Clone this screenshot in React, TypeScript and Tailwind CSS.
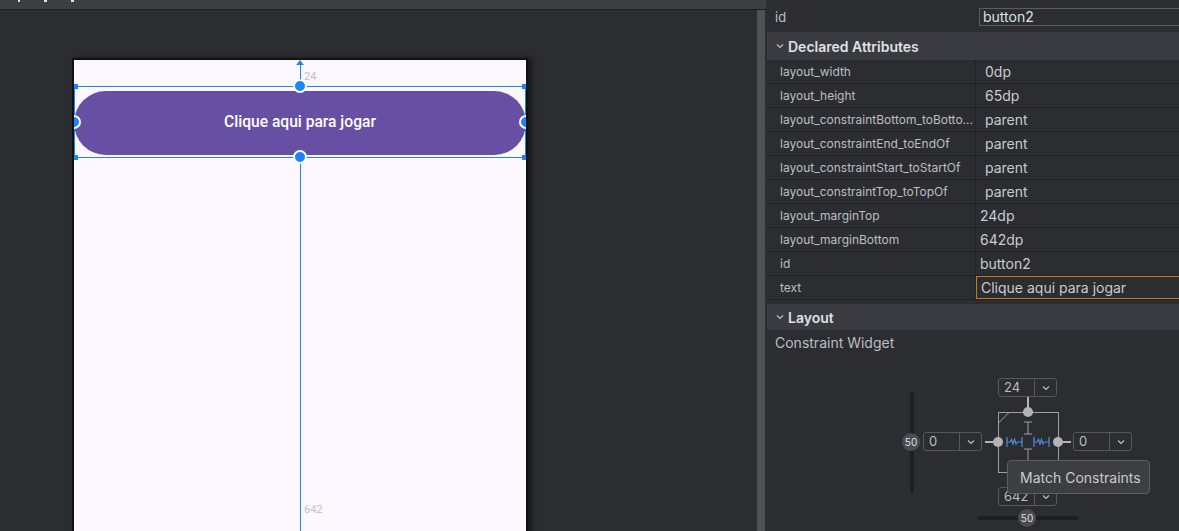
import React from 'react'

const rows: { name: string; value: string; indent: boolean; active?: boolean }[] = [
  { name: 'layout_width', value: '0dp', indent: true },
  { name: 'layout_height', value: '65dp', indent: true },
  { name: 'layout_constraintBottom_toBotto...', value: 'parent', indent: true },
  { name: 'layout_constraintEnd_toEndOf', value: 'parent', indent: true },
  { name: 'layout_constraintStart_toStartOf', value: 'parent', indent: true },
  { name: 'layout_constraintTop_toTopOf', value: 'parent', indent: true },
  { name: 'layout_marginTop', value: '24dp', indent: false },
  { name: 'layout_marginBottom', value: '642dp', indent: false },
  { name: 'id', value: 'button2', indent: false },
  { name: 'text', value: 'Clique aqui para jogar', indent: false, active: true },
]

function Chevron({ className }: { className?: string }) {
  return (
    <svg width="10" height="10" viewBox="0 0 10 10" className={className}>
      <path d="M2 3.5 L5 6.5 L8 3.5" fill="none" stroke="currentColor" strokeWidth="1.2" />
    </svg>
  )
}

function Dropdown({ value, className }: { value: string; className: string }) {
  return (
    <div className={`absolute flex h-[19px] w-[59px] items-center rounded-[3px] border border-[#55585d] bg-[#2b2d30] text-[13px] text-[#bcbec4] ${className}`}>
      <span className="flex-1 pl-[5px] leading-none">{value}</span>
      <div className="flex h-full w-[22px] items-center justify-center border-l border-[#55585d] text-[#bcbec4]">
        <Chevron />
      </div>
    </div>
  )
}

function Knob({ className }: { className: string }) {
  return (
    <div className={`absolute flex h-[18px] w-[18px] items-center justify-center rounded-full bg-[#4a4c50] text-[10px] text-[#dfe1e5] ${className}`}>
      50
    </div>
  )
}

function Handle({ className }: { className: string }) {
  return <div className={`absolute h-[14px] w-[14px] rounded-full border-2 border-white bg-[#1a85ff] ${className}`} />
}

function Spring({ x }: { x: number }) {
  return (
    <g stroke="#4d8fe0" strokeWidth="1.2" fill="none">
      <line x1={x} y1={82} x2={x} y2={92} />
      <path d={`M${x} 87 H${x + 3} L${x + 4.5} 84.5 L${x + 6} 89 L${x + 7.5} 84.5 L${x + 9} 89 L${x + 10.5} 87 H${x + 15}`} />
      <line x1={x + 15} y1={82} x2={x + 15} y2={92} />
    </g>
  )
}

export default function App() {
  return (
    <div className="flex h-[531px] w-[1179px] overflow-hidden bg-[#2b2d30] font-['Inter',sans-serif]">
      {/* design surface */}
      <div className="flex w-[766px] flex-col">
        <div className="flex h-[10px] shrink-0 items-start gap-[24px] border-b border-[#1e1f22] bg-[#3b3e42] pl-[18px]">
          <div className="h-[2px] w-[2px] bg-[#dfe1e5]" />
          <div className="h-[2px] w-[3px] bg-[#dfe1e5]" />
          <div className="h-[2px] w-[3px] bg-[#dfe1e5]" />
        </div>
        <div className="flex flex-1">
          <div className="w-[757px] overflow-hidden pl-[72px] pt-[48px]">
            <div className="relative h-[500px] w-[456px] border-2 border-[#111] bg-[#fdf7ff] shadow-[4px_0_6px_rgba(0,0,0,0.5)] font-['Roboto',sans-serif]">
              <div className="relative h-full w-full overflow-hidden">
                {/* button */}
                <div className="mt-[31px] flex h-[64px] w-full items-center justify-center rounded-full bg-[#6750a4] text-[15.6px] font-medium text-white">
                  Clique aqui para jogar
                </div>

                {/* selection */}
                <div className="absolute left-0 top-[26px] h-[72px] w-[452px] border border-[#1a85ff]" />
                <div className="absolute left-0 top-[24px] h-[5px] w-[4px] bg-[#1a85ff]" />
                <div className="absolute right-0 top-[24px] h-[5px] w-[4px] bg-[#1a85ff]" />
                <div className="absolute left-0 top-[95px] h-[5px] w-[4px] bg-[#1a85ff]" />
                <div className="absolute right-0 top-[95px] h-[5px] w-[4px] bg-[#1a85ff]" />

                {/* top margin arrow */}
                <div className="absolute left-[226px] top-[3px] h-[23px] w-[1px] bg-[#1a85ff]" />
                <div className="absolute left-[222px] top-0 h-0 w-0 border-x-[4.5px] border-b-[5px] border-x-transparent border-b-[#1a85ff]" />
                <span className="absolute left-[230px] top-[9px] text-[11px] text-[#bdbdbd]">24</span>

                {/* bottom margin line */}
                <div className="absolute left-[226px] top-[98px] h-[402px] w-[1px] bg-[#1a85ff]" />
                <span className="absolute left-[230px] top-[442px] text-[11px] text-[#c4c4c4]">642</span>

                <Handle className="left-[219px] top-[19px]" />
                <Handle className="left-[219px] top-[90px]" />
                <Handle className="left-[-7px] top-[55px]" />
                <Handle className="left-[445px] top-[55px]" />
              </div>
            </div>
          </div>
          <div className="w-[8px] bg-[#4e5155]" />
        </div>
      </div>

      {/* attributes panel */}
      <div className="flex flex-1 flex-col overflow-hidden text-[#bcbec4]">
        <div className="flex h-[32px] pt-[8px]">
          <span className="w-[213px] shrink-0 pl-[9px] text-[13px] leading-[18px] text-[#bcbec4]">id</span>
          <div className="mr-[-4px] h-[18px] flex-1 border border-[#5a5d63] pl-[3px] text-[14px] leading-[16px] text-[#dfe1e5]">button2</div>
        </div>

        <div className="ml-[1px] flex h-[28px] items-center bg-[#393b40] pl-[8px] text-[14px] font-semibold text-[#dfe1e5]">
          <Chevron className="mr-[3px] text-[#bcbec4]" />
          Declared Attributes
        </div>

        <div className="ml-[1px]">
          {rows.map(r => (
            <div key={r.name} className="flex h-[24px] border-b border-[#222326]">
              <div className="flex w-[209px] shrink-0 items-center overflow-hidden whitespace-nowrap border-r border-[#222326] pl-[13px] text-[12px] text-[#bcbec4]">
                {r.name}
              </div>
              <div
                className={`flex flex-1 items-center text-[14px] text-[#c9cbd0] ${r.indent ? 'pl-[9px]' : 'pl-[4px]'} ${r.active ? 'mr-[-4px] border border-[#c07b24]' : ''}`}
              >
                {r.value}
              </div>
            </div>
          ))}
        </div>

        <div className="ml-[1px] mt-[4px] flex h-[26px] items-center bg-[#393b40] pl-[8px] text-[14px] font-semibold text-[#dfe1e5]">
          <Chevron className="mr-[3px] text-[#bcbec4]" />
          Layout
        </div>

        <div className="flex h-[25px] items-center pl-[9px] text-[14px] text-[#bcbec4]">Constraint Widget</div>

        {/* constraint widget */}
        <div className="relative flex-1">
          <svg width="413" height="176" className="absolute left-0 top-0">
            <rect x="144" y="36" width="4" height="102" rx="2" fill="#1e1f22" />
            <rect x="211" y="161" width="102" height="4" rx="2" fill="#1e1f22" />
            <g stroke="#9d9fa3" strokeWidth="1" fill="none">
              <rect x="232.5" y="57.5" width="60" height="60" />
              <line x1="232.5" y1="68" x2="243" y2="57.5" />
              <line x1="262" y1="67" x2="262" y2="79" />
              <line x1="258" y1="67" x2="266" y2="67" />
              <line x1="258" y1="79" x2="266" y2="79" />
              <line x1="262" y1="94" x2="262" y2="110" />
              <line x1="258" y1="94" x2="266" y2="94" />
            </g>
            <g stroke="#b1b3b7" strokeWidth="2">
              <line x1="262" y1="41" x2="262" y2="52" />
              <line x1="219" y1="87" x2="227" y2="87" />
              <line x1="297" y1="87" x2="305" y2="87" />
            </g>
            <g fill="#b1b3b7">
              <circle cx="262" cy="57" r="5" />
              <circle cx="232" cy="87" r="5" />
              <circle cx="292" cy="87" r="5" />
            </g>
            <Spring x={241} />
            <Spring x={268} />
          </svg>

          <Knob className="left-[136px] top-[78px]" />
          <Knob className="left-[252px] top-[154px]" />

          <Dropdown value="24" className="left-[232px] top-[23px]" />
          <Dropdown value="0" className="left-[157px] top-[77px]" />
          <Dropdown value="0" className="left-[307px] top-[77px]" />
          <Dropdown value="642" className="left-[232px] top-[132px]" />

          <div className="absolute left-[241px] top-[105px] flex h-[34px] w-[143px] items-center rounded-[4px] border border-[#5b5e63] bg-[#3c3e42] pl-[12px] text-[14px] text-[#c9cbd0]">
            Match Constraints
          </div>
        </div>
      </div>
    </div>
  )
}
